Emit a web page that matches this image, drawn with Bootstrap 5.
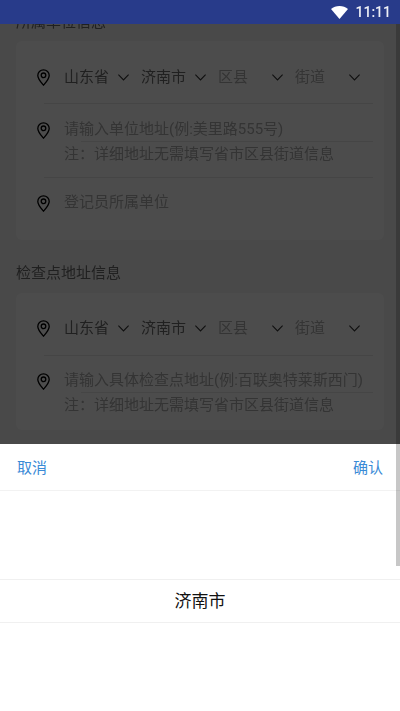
<!DOCTYPE html>
<html lang="zh">
<head>
<meta charset="utf-8">
<meta name="viewport" content="width=device-width, initial-scale=1">
<link rel="stylesheet" href="https://cdn.jsdelivr.net/npm/bootstrap@5.3.0/dist/css/bootstrap.min.css">
<style>
html,body{height:100%;overflow:hidden}
body{font-family:Roboto,"Noto Sans CJK SC",sans-serif;font-size:15px;color:#6c6c6c;background:#f5f5f5;line-height:24px}
.phone{width:400px;height:711px;overflow:hidden}
.statusbar{height:24px;background:#283b8a;color:#eef0f6;z-index:30;font-weight:500;font-size:14px;padding-right:9px;gap:7px;line-height:20px}
.pagearea{padding:0 16px;height:687px;overflow:hidden;will-change:opacity}
.sect-title{height:24px;line-height:24px}
.sect-title.first{margin-top:-14px;margin-bottom:7px}
.sect-title.second{margin-top:21px;margin-bottom:8px}
.addr-card{background:#fff;border-radius:6px;padding:0 11px 0 21px}
.addr-row{display:flex;padding-top:24px}
.rule-under{border-bottom:1px solid #e8e8e8;margin-left:7px}
.pin{width:13px;height:17px;flex:none;margin:4px 14px 0 0}
.rule-under>.pin{margin-left:-7px}
.sel-row{height:63px}
.sel-item{width:77px;flex:none;display:flex;justify-content:space-between;align-items:center;height:24px;padding-right:12px}
.sel-item.off,.ph{color:#adadad}
.chev{width:11px;height:7px;flex:none}
.txt-row{height:74px;padding-top:13px}
.txt-row .pin{margin-top:5px}
.txt-col{flex:1;min-width:0;white-space:nowrap}
.line-one{position:relative;height:25px}
.line-one::after{content:"";position:absolute;left:17px;right:0;bottom:0;height:1px;background:#e8e8e8}
.reg-row{height:62px;padding-top:12px}
.reg-row .pin{margin-top:5px}
.card-two .sel-row{padding-top:23px}
.card-two .txt-row{padding-top:12px}
.dim{inset:24px 0 0 0;background:rgba(0,0,0,.7);z-index:10}
.sheet{left:0;right:0;bottom:0;height:267px;background:#fff;z-index:20}
.sheet-head{height:47px;padding:1px 17px 0;border-bottom:1px solid #f2f2f2;color:#3a8ad6}
.wheel-pick{height:44px;margin-top:88px;padding-bottom:1px;border-top:1px solid #f0f0f0;border-bottom:1px solid #f0f0f0;font-size:17px;color:#111}
.scroll-thumb{right:0;top:24px;width:4px;height:542px;background:rgba(0,0,0,.22);z-index:25}
</style>
</head>
<body>
<div class="phone position-relative">
  <div class="statusbar d-flex align-items-center justify-content-end position-relative">
    <svg width="17" height="13" viewBox="0 0 17 13"><path d="M8.500 13 0 3.100C2.300 1.200 5.300 0 8.500 0s6.200 1.200 8.500 3.100z" fill="#fff"/></svg>
    <span>11:11</span>
  </div>
  <div class="pagearea">
    <div class="sect-title first">所属单位信息</div>
    <div class="addr-card">
      <div class="addr-row sel-row rule-under">
        <svg class="pin" viewBox="0 0 13 17"><path d="M6.500.8C3.300.8.800 3.300.800 6.400c0 3.400 3 6.600 5.700 9.800 2.700-3.200 5.700-6.400 5.700-9.800C12.200 3.300 9.700.8 6.500.8z" fill="none" stroke="#000" stroke-width="1.300"/><circle cx="6.500" cy="6.300" r="2.300" fill="none" stroke="#000" stroke-width="1.300"/></svg>
        <div class="sel-item">山东省<svg class="chev" viewBox="0 0 11 7"><path d="M.4.700 5.500 5.900 10.600.7" fill="none" stroke="#333" stroke-width="1.100"/></svg></div>
        <div class="sel-item">济南市<svg class="chev" viewBox="0 0 11 7"><path d="M.4.700 5.500 5.900 10.600.7" fill="none" stroke="#333" stroke-width="1.100"/></svg></div>
        <div class="sel-item off">区县<svg class="chev" viewBox="0 0 11 7"><path d="M.4.700 5.500 5.900 10.600.7" fill="none" stroke="#333" stroke-width="1.100"/></svg></div>
        <div class="sel-item off">街道<svg class="chev" viewBox="0 0 11 7"><path d="M.4.700 5.500 5.900 10.600.7" fill="none" stroke="#333" stroke-width="1.100"/></svg></div>
      </div>
      <div class="addr-row txt-row rule-under">
        <svg class="pin" viewBox="0 0 13 17"><path d="M6.500.8C3.300.8.800 3.300.800 6.400c0 3.400 3 6.600 5.700 9.800 2.700-3.200 5.700-6.400 5.700-9.800C12.200 3.300 9.700.8 6.500.8z" fill="none" stroke="#000" stroke-width="1.300"/><circle cx="6.500" cy="6.300" r="2.300" fill="none" stroke="#000" stroke-width="1.300"/></svg>
        <div class="txt-col ph">
          <div class="line-one">请输入单位地址(例:美里路555号)</div>
          <div>注&#xFF1A;详细地址无需填写省市区县街道信息</div>
        </div>
      </div>
      <div class="addr-row reg-row">
        <svg class="pin" viewBox="0 0 13 17"><path d="M6.500.8C3.300.8.800 3.300.800 6.400c0 3.400 3 6.600 5.700 9.800 2.700-3.200 5.700-6.400 5.700-9.800C12.200 3.300 9.700.8 6.500.8z" fill="none" stroke="#000" stroke-width="1.300"/><circle cx="6.500" cy="6.300" r="2.300" fill="none" stroke="#000" stroke-width="1.300"/></svg>
        <div class="txt-col ph">登记员所属单位</div>
      </div>
    </div>
    <div class="sect-title second">检查点地址信息</div>
    <div class="addr-card card-two">
      <div class="addr-row sel-row rule-under">
        <svg class="pin" viewBox="0 0 13 17"><path d="M6.500.8C3.300.8.800 3.300.800 6.400c0 3.400 3 6.600 5.700 9.800 2.700-3.200 5.700-6.400 5.700-9.800C12.200 3.300 9.700.8 6.500.8z" fill="none" stroke="#000" stroke-width="1.300"/><circle cx="6.500" cy="6.300" r="2.300" fill="none" stroke="#000" stroke-width="1.300"/></svg>
        <div class="sel-item">山东省<svg class="chev" viewBox="0 0 11 7"><path d="M.4.700 5.500 5.900 10.600.7" fill="none" stroke="#333" stroke-width="1.100"/></svg></div>
        <div class="sel-item">济南市<svg class="chev" viewBox="0 0 11 7"><path d="M.4.700 5.500 5.900 10.600.7" fill="none" stroke="#333" stroke-width="1.100"/></svg></div>
        <div class="sel-item off">区县<svg class="chev" viewBox="0 0 11 7"><path d="M.4.700 5.500 5.900 10.600.7" fill="none" stroke="#333" stroke-width="1.100"/></svg></div>
        <div class="sel-item off">街道<svg class="chev" viewBox="0 0 11 7"><path d="M.4.700 5.500 5.900 10.600.7" fill="none" stroke="#333" stroke-width="1.100"/></svg></div>
      </div>
      <div class="addr-row txt-row">
        <svg class="pin" viewBox="0 0 13 17"><path d="M6.500.8C3.300.8.800 3.300.800 6.400c0 3.400 3 6.600 5.700 9.800 2.700-3.200 5.700-6.400 5.700-9.800C12.200 3.300 9.700.8 6.500.8z" fill="none" stroke="#000" stroke-width="1.300"/><circle cx="6.500" cy="6.300" r="2.300" fill="none" stroke="#000" stroke-width="1.300"/></svg>
        <div class="txt-col ph">
          <div class="line-one">请输入具体检查点地址(例:百联奥特莱斯西门)</div>
          <div>注&#xFF1A;详细地址无需填写省市区县街道信息</div>
        </div>
      </div>
    </div>
  </div>
  <div class="dim position-absolute"></div>
  <div class="sheet position-absolute">
    <div class="sheet-head d-flex justify-content-between align-items-center"><span>取消</span><span>确认</span></div>
    <div class="wheel-pick d-flex align-items-center justify-content-center">济南市</div>
  </div>
  <div class="scroll-thumb position-absolute"></div>
</div>
</body>
</html>
